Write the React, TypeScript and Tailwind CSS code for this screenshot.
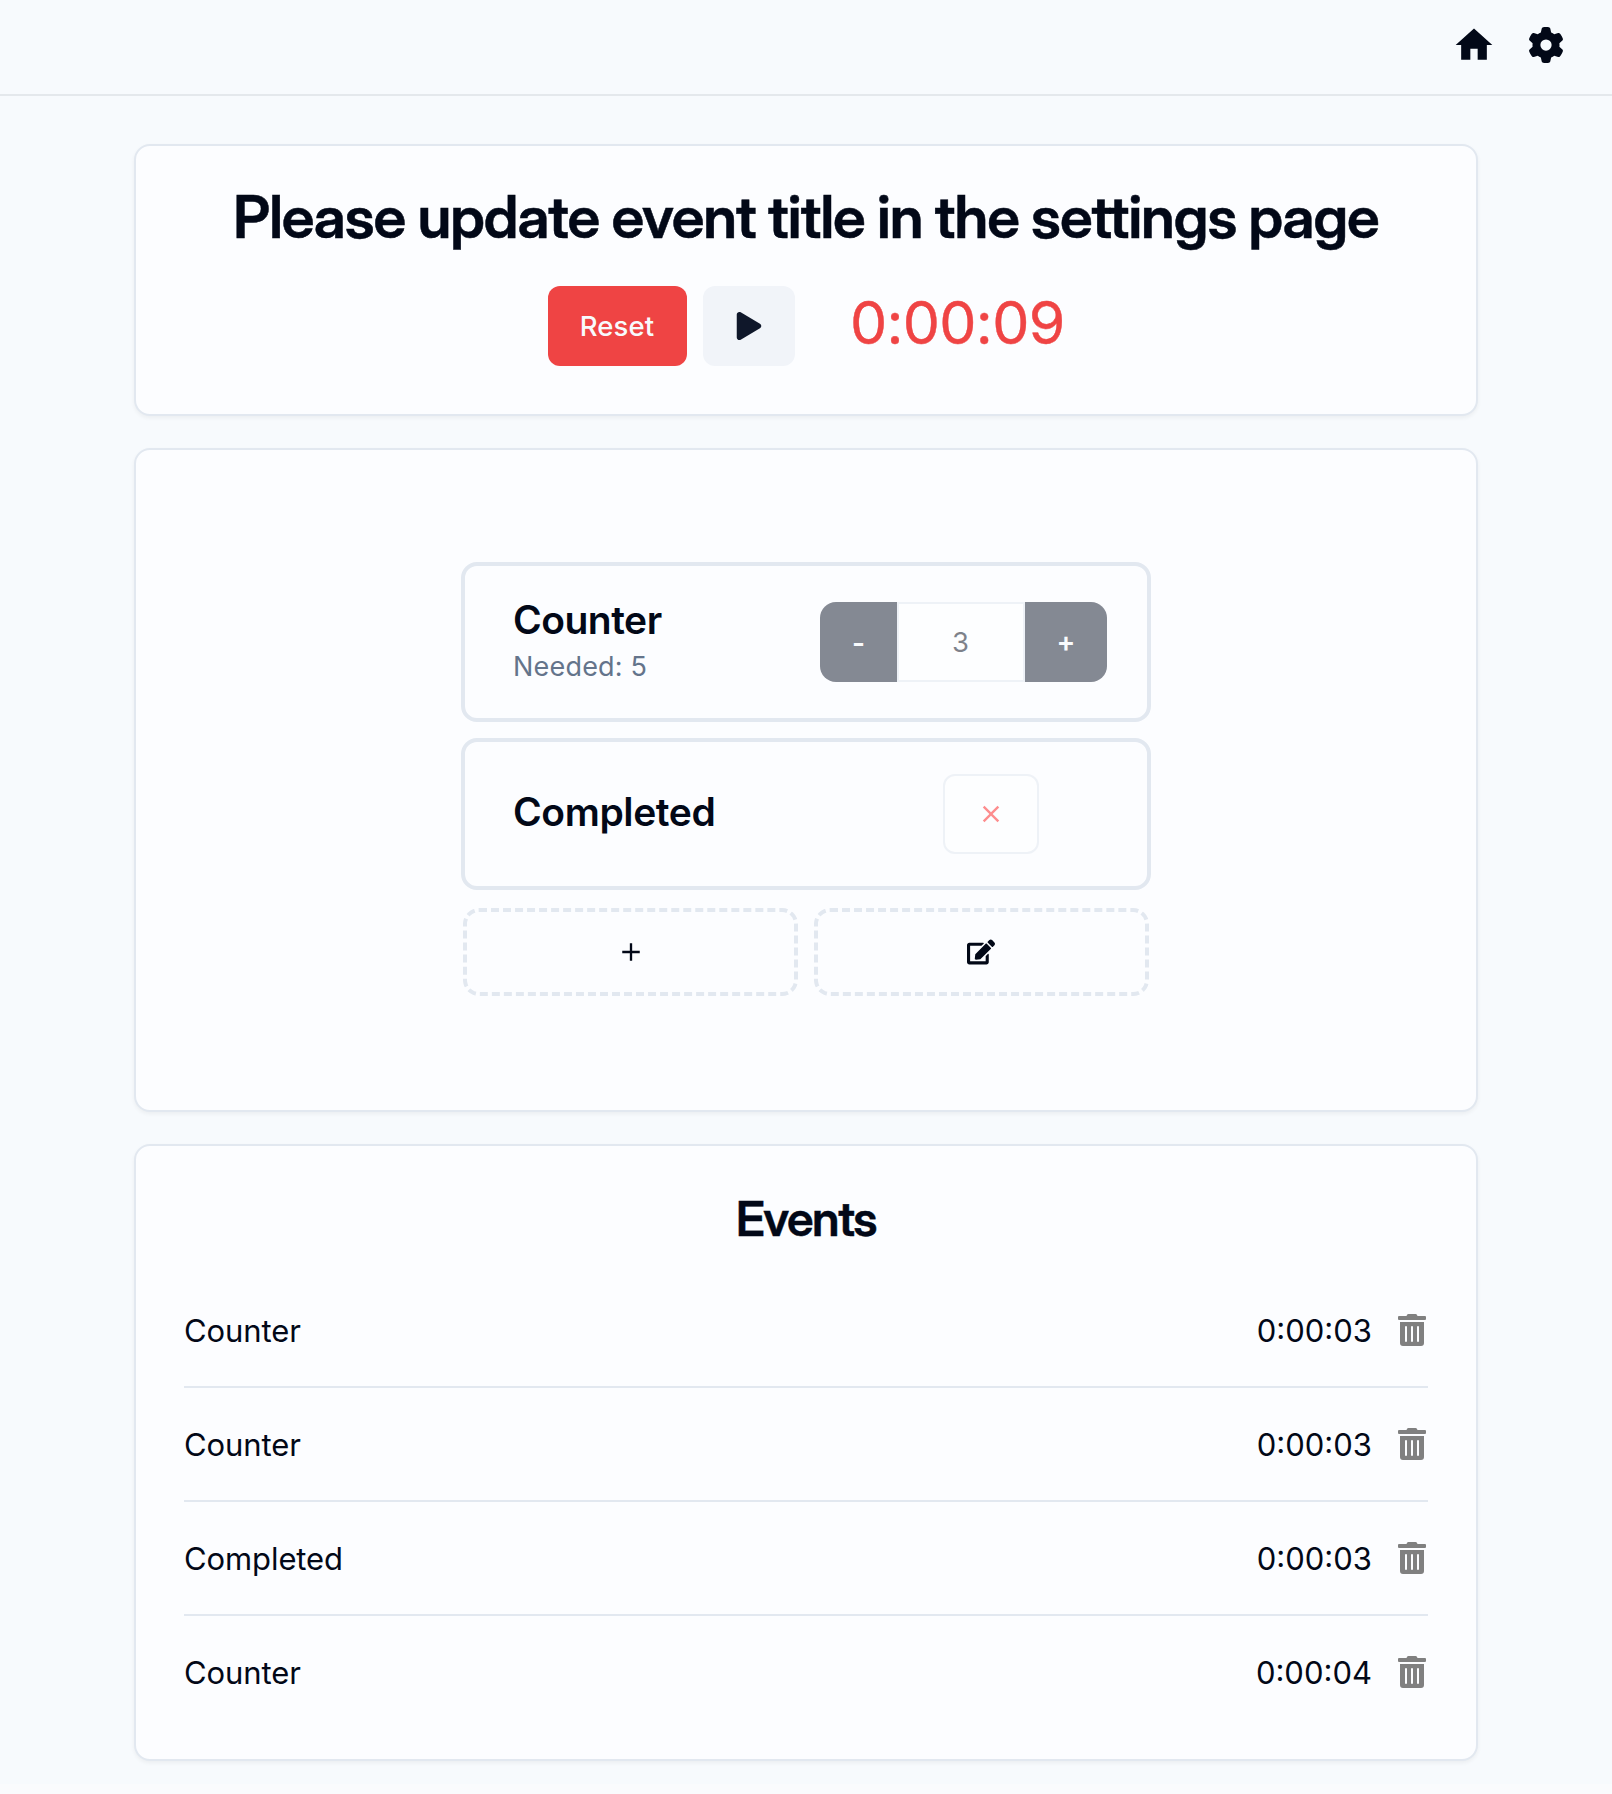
import type { ReactNode } from "react";
import { FaEdit, FaPlay, FaTrashAlt } from "react-icons/fa";
import { FaGear } from "react-icons/fa6";
import { IoMdAdd } from "react-icons/io";
import { MdClose, MdHome } from "react-icons/md";

const events = [
  { name: "Counter", time: "0:00:03" },
  { name: "Counter", time: "0:00:03" },
  { name: "Completed", time: "0:00:03" },
  { name: "Counter", time: "0:00:04" },
];

function Card({ className, children }: { className: string; children: ReactNode }) {
  return (
    <section
      className={`flex flex-col items-center rounded-[16px] border-2 border-[#e2e8f0] bg-[#fcfdff] shadow-[0_2px_4px_0_rgba(0,0,0,0.05)] ${className}`}
    >
      {children}
    </section>
  );
}

function Header() {
  return (
    <header className="flex h-24 items-center justify-end gap-8 border-b-2 border-[#e4e8ec] pr-12 pb-1">
      <MdHome size={44} />
      <FaGear size={36} />
    </header>
  );
}

function TimerCard() {
  return (
    <Card className="h-[272px] pt-[41px]">
      <h1 className="font-['Inter_Display','Inter',sans-serif] text-[59px] leading-[60px] font-semibold tracking-[-1.02px] whitespace-nowrap [-webkit-text-stroke:0.5px_currentColor]">
        Please update event title in the settings page
      </h1>
      <div className="mt-[39px] flex">
        <button className="h-20 w-[139px] rounded-xl bg-[#ef4444] pt-px pr-px text-[27.5px] font-medium tracking-[0.1px] text-[#f8fafc]">
          Reset
        </button>
        <button className="ml-4 flex h-20 w-[92px] items-center justify-center rounded-xl bg-[#f1f4f9] pr-px text-[#0f172a]">
          <FaPlay size={28} />
        </button>
        <div className="ml-[55px] w-[214px] text-[59px] leading-[73px] tracking-[-0.7px] whitespace-nowrap text-[#ef4444] [-webkit-text-stroke:0.4px_currentColor]">
          0:00:09
        </div>
      </div>
    </Card>
  );
}

function TaskCard() {
  return (
    <Card className="h-[664px] pt-28">
      <div className="flex w-[690px] flex-col">
        <div className="flex h-40 items-center justify-between rounded-[16px] border-4 border-[#e2e8f0] pr-10 pl-12">
          <div>
            <h3 className="text-[39px] leading-[40px] font-semibold tracking-[-0.5px]">Counter</h3>
            <p className="mt-[9px] text-[27px] leading-[36px] tracking-[0.2px] text-[#64748b]">Needed: 5</p>
          </div>
          <div className="flex h-20 text-[28px] opacity-50">
            <button className="w-[77px] rounded-l-[16px] bg-[#0f172a] pt-px font-semibold text-[#f8fafc]">-</button>
            <div className="flex w-32 items-center justify-center border-2 border-[#e2e8f0] bg-white pt-0.5 pr-px text-[27.5px]">3</div>
            <button className="w-[82px] rounded-r-[16px] bg-[#0f172a] font-semibold text-[#f8fafc]">+</button>
          </div>
        </div>
        <div className="mt-4 flex h-[152px] items-center justify-between rounded-[16px] border-4 border-[#e2e8f0] pr-[108px] pl-12">
          <h3 className="pb-1 text-[39px] leading-[40px] font-semibold tracking-[-0.4px]">Completed</h3>
          <button className="flex h-20 w-24 items-center justify-center rounded-xl border-2 border-[#e2e8f0] bg-white text-[#ff2020] opacity-50">
            <MdClose size={28} />
          </button>
        </div>
        <div className="mt-[18px] flex justify-between px-0.5">
          <button className="flex h-[88px] w-[335px] items-center justify-center rounded-[16px] border-4 border-dashed border-[#e2e8f0]">
            <IoMdAdd size={28} />
          </button>
          <button className="flex h-[88px] w-[335px] items-center justify-center rounded-[16px] border-4 border-dashed border-[#e2e8f0] pr-px">
            <FaEdit size={28} />
          </button>
        </div>
      </div>
    </Card>
  );
}

function EventsCard() {
  return (
    <Card className="h-[617px] px-12 pt-[49px]">
      <h2 className="font-['Inter_Display','Inter',sans-serif] text-[48px] leading-[48px] font-semibold tracking-[-1.4px] [-webkit-text-stroke:0.4px_currentColor]">Events</h2>
      <ul className="mt-[31px] w-full divide-y-2 divide-[#e2e8f0]">
        {events.map((event, index) => (
          <li
            key={index}
            className="flex h-[114px] items-center justify-between text-[31px] last:h-28"
          >
            <span className="pt-0.5 tracking-[-0.1px]">{event.name}</span>
            <span className="flex items-center gap-6">
              <span className="pt-0.5">{event.time}</span>
              <FaTrashAlt size={32} className="text-[#808080]" />
            </span>
          </li>
        ))}
      </ul>
    </Card>
  );
}

export default function App() {
  return (
    <div className="h-[1794px] bg-[#fafbfd] font-['Inter',sans-serif] text-[#020817]">
      <div className="h-[1784px] bg-[#f7fafd]">
        <Header />
        <main className="mx-auto flex w-[1344px] flex-col gap-8 pt-12">
          <TimerCard />
          <TaskCard />
          <EventsCard />
        </main>
      </div>
    </div>
  );
}
